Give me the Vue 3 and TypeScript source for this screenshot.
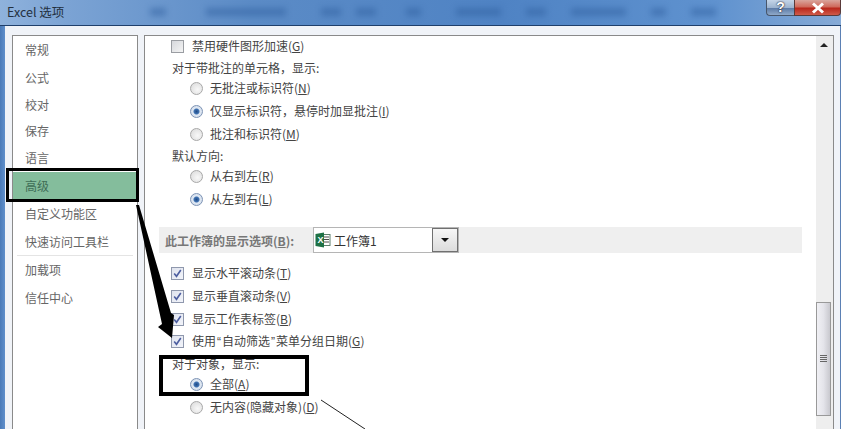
<script setup lang="ts">
interface Row {
  kind: 'check' | 'radio' | 'label'
  text: string
  key?: string
  on?: boolean
  gap: number
}
const nav: { t: string; h: number; cur?: boolean; sep?: boolean }[] = [
  { t: '常规', h: 28 },
  { t: '公式', h: 28 },
  { t: '校对', h: 26 },
  { t: '保存', h: 26 },
  { t: '语言', h: 28 },
  { t: '高级', h: 28, cur: true },
  { t: '自定义功能区', h: 28 },
  { t: '快速访问工具栏', h: 28, sep: true },
  { t: '加载项', h: 28 },
  { t: '信任中心', h: 28 }
]
const top: Row[] = [
  { kind: 'check', text: '禁用硬件图形加速', key: 'G', gap: 2 },
  { kind: 'label', text: '对于带批注的单元格，显示:', gap: 6 },
  { kind: 'radio', text: '无批注或标识符', key: 'N', gap: 4 },
  { kind: 'radio', text: '仅显示标识符，悬停时加显批注', key: 'I', on: true, gap: 7 },
  { kind: 'radio', text: '批注和标识符', key: 'M', gap: 7 },
  { kind: 'label', text: '默认方向:', gap: 6 },
  { kind: 'radio', text: '从右到左', key: 'R', gap: 4 },
  { kind: 'radio', text: '从左到右', key: 'L', on: true, gap: 7 }
]
const bottom: Row[] = [
  { kind: 'check', text: '显示水平滚动条', key: 'T', on: true, gap: 0 },
  { kind: 'check', text: '显示垂直滚动条', key: 'V', on: true, gap: 7 },
  { kind: 'check', text: '显示工作表标签', key: 'B', on: true, gap: 7 },
  { kind: 'check', text: '使用“自动筛选”菜单分组日期', key: 'G', on: true, gap: 6 },
  { kind: 'label', text: '对于对象，显示:', gap: 7 },
  { kind: 'radio', text: '全部', key: 'A', on: true, gap: 4 },
  { kind: 'radio', text: '无内容(隐藏对象)', key: 'D', gap: 7 }
]
const blobs = [
  { w: 16, m: 3 }, { w: 80, m: 40 }, { w: 20, m: 35 }, { w: 20, m: 15 }, { w: 15, m: 30 },
  { w: 45, m: 35 }, { w: 20, m: 25 }, { w: 55, m: 25 }, { w: 15, m: 25 }, { w: 25, m: 25 }
]
function parts(text: string): { t: string; q: boolean }[] {
  return text.split(/([“”])/).filter(Boolean).map(t => ({ t, q: t === '“' || t === '”' }))
}
</script>

<template>
  <div class="win">
    <header class="title">
      <span class="title-text">Excel 选项</span>
      <div class="blobs">
        <i v-for="(b, i) in blobs" :key="i" :style="{ width: b.w + 'px', marginLeft: b.m + 'px' }"></i>
      </div>
      <div class="ctrls">
        <span class="help">?</span>
        <span class="close">
          <svg width="14" height="12" viewBox="0 0 14 12"><path d="M2 1.5l10 9M12 1.5l-10 9" stroke="#fff" stroke-width="3" fill="none"/></svg>
        </span>
      </div>
    </header>
    <div class="body">
      <nav class="nav">
        <div
          v-for="n in nav"
          :key="n.t"
          class="nav-item"
          :class="{ cur: n.cur, sep: n.sep }"
          :style="{ height: n.h + 'px' }"
        >{{ n.t }}</div>
      </nav>
      <main class="panel">
        <div class="content">
          <div
            v-for="r in top"
            :key="r.text"
            class="row"
            :class="r.kind"
            :style="{ marginTop: r.gap + 'px' }"
          >
            <span v-if="r.kind === 'check'" class="cb" :class="{ on: r.on }">
              <svg v-if="r.on" width="11" height="11" viewBox="0 0 11 11"><path d="M2.2 5.5l2.3 2.8L8.8 2" stroke="#4d5ea0" stroke-width="1.6" fill="none"/></svg>
            </span>
            <span v-if="r.kind === 'radio'" class="rd" :class="{ on: r.on }"></span>
            <span><template v-for="p in parts(r.text)" :key="p.t"><span :class="{ q: p.q }">{{ p.t }}</span></template><template v-if="r.key">(<u>{{ r.key }}</u>)</template></span>
          </div>
          <div class="band">
            <span class="band-label">此工作簿的显示选项(<u>B</u>):</span>
            <div class="combo">
              <svg class="xl" width="16" height="16" viewBox="0 0 16 16">
                <rect x="7" y="2.5" width="8" height="11" fill="#fff" stroke="#5d7f6c"/>
                <path d="M9 5h5M9 7.5h5M9 10h5" stroke="#4a4a4a" stroke-width="1"/>
                <path d="M0.5 2L9 0.5v15L0.5 14z" fill="#1e7145"/>
                <text x="2.4" y="11.4" font-size="9" font-weight="700" fill="#fff" font-family="Liberation Sans, sans-serif">X</text>
              </svg>
              <span class="combo-text">工作簿1</span>
              <span class="combo-btn"><i></i></span>
            </div>
          </div>
          <div
            v-for="r in bottom"
            :key="r.text"
            class="row"
            :class="r.kind"
            :style="{ marginTop: r.gap + 'px' }"
          >
            <span v-if="r.kind === 'check'" class="cb" :class="{ on: r.on }">
              <svg v-if="r.on" width="11" height="11" viewBox="0 0 11 11"><path d="M2.2 5.5l2.3 2.8L8.8 2" stroke="#4d5ea0" stroke-width="1.6" fill="none"/></svg>
            </span>
            <span v-if="r.kind === 'radio'" class="rd" :class="{ on: r.on }"></span>
            <span><template v-for="p in parts(r.text)" :key="p.t"><span :class="{ q: p.q }">{{ p.t }}</span></template><template v-if="r.key">(<u>{{ r.key }}</u>)</template></span>
          </div>
        </div>
        <aside class="sb">
          <span class="sb-up"></span>
          <div class="thumb">
            <svg width="7" height="8" viewBox="0 0 7 8"><path d="M0 .5h7M0 2.5h7M0 4.5h7M0 6.5h7" stroke="#666" stroke-width="1"/></svg>
          </div>
        </aside>
      </main>
    </div>
    <div class="mark mark-nav"></div>
    <div class="mark mark-obj"></div>
    <svg class="arrows" width="841" height="429" viewBox="0 0 841 429">
      <path d="M136 205L139 205L171 313L174 315L172 338L158 327L162 324Z" fill="#000"/>
      <path d="M321 400L365 429" stroke="#222" stroke-width="1" fill="none"/>
    </svg>
  </div>
</template>

<style>
html, body { margin: 0; padding: 0; background: #fff; }
</style>

<style scoped>
.win {
  position: relative;
  width: 841px;
  height: 429px;
  overflow: hidden;
  display: flex;
  flex-direction: column;
  font-family: "Noto Sans CJK SC", "Liberation Sans", sans-serif;
  font-size: 12px;
  color: #444;
  background: linear-gradient(90deg, #4a7ab8 0, #5f8fcb 5px, #4a7ab8 100%);
}
.title {
  height: 26px;
  box-sizing: border-box;
  flex: none;
  display: flex;
  align-items: flex-start;
  background: linear-gradient(90deg, #8fb2dc 0, #7ba3d4 8%, #5b8bc6 30%, #4f83c4 60%, #5f92cf 85%, #86aad6 100%);
  border-bottom: 1px solid #1f3f6b;
}
.title-text {
  margin: 3px 0 0 7px;
  font-size: 12.5px;
  line-height: 18px;
  color: #23303f;
  width: 140px;
  flex: none;
}
.blobs {
  flex: 1;
  min-width: 0;
  display: flex;
  padding-top: 8px;
  filter: blur(3px);
  opacity: .5;
}
.blobs i { height: 8px; flex: none; background: #2f5f9f; display: block; }
.ctrls {
  display: flex;
  height: 16px;
  flex: none;
}
.help {
  width: 28px;
  box-sizing: border-box;
  text-align: center;
  color: #fff;
  font: 700 14px/15px "Liberation Sans", sans-serif;
  background: linear-gradient(180deg, #c5d5e8 0, #9db4d0 50%, #5d7ba6 55%, #8fa9c9 100%);
  border: 1px solid #47566b;
  border-top: 0;
  border-right: 0;
  border-radius: 0 0 0 4px;
  text-shadow: 0 0 2px #223, 0 0 1px #223;
}
.close {
  width: 47px;
  box-sizing: border-box;
  display: flex;
  align-items: center;
  justify-content: center;
  background: linear-gradient(180deg, #d9a59c 0, #cf6a5c 45%, #b9281c 55%, #cf5a4a 100%);
  border: 1px solid #5a3a3a;
  border-top: 0;
  border-radius: 0 0 4px 0;
}
.body {
  flex: 1;
  min-height: 0;
  margin-left: 5px;
  padding: 9px 6px 0 7px;
  background: #f0f3f8;
  display: flex;
  gap: 6px;
  border-right: 1px solid #5b80b4;
}
.nav {
  width: 126px;
  flex: none;
  box-sizing: border-box;
  background: #fff;
  border: 1px solid #8a8a8a;
  border-bottom: 0;
  color: #666;
  display: flex;
  flex-direction: column;
}
.nav-item {
  flex: none;
  display: flex;
  align-items: center;
  padding-left: 12px;
  box-sizing: border-box;
  line-height: 1;
}
.nav-item.cur { background: #84bd9c; color: #3f6d57; }
.nav-item.sep { position: relative; }
.nav-item.sep::after {
  content: "";
  position: absolute;
  left: 4px;
  right: 4px;
  bottom: 0;
  height: 1px;
  background: #e4e4e4;
}
.panel {
  flex: 1;
  min-width: 0;
  display: flex;
  background: #fff;
  border: 1px solid #8a8a8a;
  border-bottom: 0;
  box-sizing: border-box;
}
.content {
  flex: 1;
  min-width: 0;
  padding: 0 14px 0 14px;
}
.row {
  height: 16px;
  display: flex;
  align-items: center;
  white-space: nowrap;
  line-height: 1;
  box-sizing: border-box;
}
.row.check { padding-left: 12px; gap: 8px; }
.row.label { padding-left: 13px; }
.row.radio { padding-left: 31px; gap: 7px; }
.q { font-family: "Liberation Sans", sans-serif; margin: 0 1px; }
u { text-underline-offset: 1px; }
.cb {
  width: 13px;
  height: 13px;
  flex: none;
  box-sizing: border-box;
  border: 1px solid #9a9da2;
  background: linear-gradient(135deg, #d6d8dc, #f4f4f4);
  display: flex;
  align-items: center;
  justify-content: center;
}
.cb.on {
  border-color: #8f98ad;
  background: linear-gradient(135deg, #dfe3ee, #f2f4fa);
}
.rd {
  width: 13px;
  height: 13px;
  flex: none;
  box-sizing: border-box;
  border-radius: 50%;
  border: 1px solid #a8a8a8;
  background: radial-gradient(circle at 60% 60%, #f8f8f8 0, #d8d8d8 100%);
}
.rd.on {
  border-color: #7d93b5;
  background: radial-gradient(circle, #1f4a86 0, #3f72b2 32%, #dfe8f3 45%, #cfd8e5 100%);
}
.band {
  height: 26px;
  margin: 20px 0 12px 0;
  background: #efefef;
  display: flex;
  align-items: center;
  box-sizing: border-box;
  padding-left: 6px;
  color: #777;
  font-weight: 700;
}
.band-label { width: 148px; flex: none; white-space: nowrap; }
.combo {
  width: 146px;
  height: 26px;
  box-sizing: border-box;
  display: flex;
  align-items: center;
  background: #fff;
  border: 1px solid #b5b5b5;
  font-weight: 400;
  color: #333;
}
.xl { margin-left: 1px; flex: none; }
.combo-text { flex: 1; padding-left: 3px; }
.combo-btn {
  width: 26px;
  height: 24px;
  box-sizing: border-box;
  flex: none;
  border: 1px solid #707070;
  background: linear-gradient(180deg, #f6f6f6, #dcdcdc);
  display: flex;
  align-items: center;
  justify-content: center;
}
.combo-btn i {
  width: 0;
  height: 0;
  border-left: 4px solid transparent;
  border-right: 4px solid transparent;
  border-top: 4px solid #111;
}
.sb {
  width: 17px;
  flex: none;
  background: #eeeeee;
  display: flex;
  flex-direction: column;
  align-items: flex-start;
}
.sb-up {
  margin: 7px 0 0 4px;
  width: 0;
  height: 0;
  border-left: 4px solid transparent;
  border-right: 4px solid transparent;
  border-bottom: 4px solid #222;
}
.thumb {
  margin-top: 255px;
  width: 15px;
  height: 114px;
  box-sizing: border-box;
  border: 1px solid #999;
  background: linear-gradient(90deg, #f0f0f4, #e4e4ea 50%, #c8c8ce);
  display: flex;
  align-items: center;
  justify-content: center;
}
.mark {
  position: absolute;
  box-sizing: border-box;
  border-style: solid;
  border-color: #000;
}
.mark-nav { left: 6px; top: 168px; width: 133px; height: 34px; border-width: 3px; }
.mark-obj { left: 159px; top: 355px; width: 150px; height: 41px; border-width: 4px; }
.arrows { position: absolute; left: 0; top: 0; pointer-events: none; }
</style>
